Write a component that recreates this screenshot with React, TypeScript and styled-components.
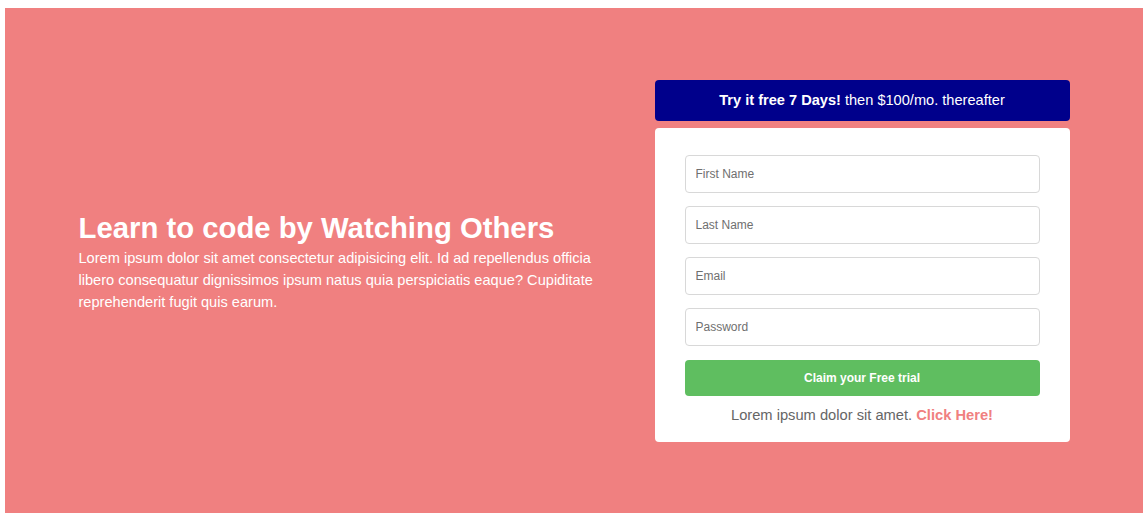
import React from "react";
import styled, { createGlobalStyle } from "styled-components";

const GlobalStyle = createGlobalStyle`
  * {
    box-sizing: border-box;
  }
  body {
    margin: 8px 5px 8px 5px;
    font-family: "Liberation Sans", Arial, sans-serif;
    background: #fff;
  }
`;

const Hero = styled.section`
  background: #f08080;
  height: 505px;
  display: flex;
  align-items: center;
  justify-content: center;
`;

const Container = styled.div`
  width: 991px;
  display: grid;
  grid-template-columns: 1fr 415px;
  gap: 50px;
  align-items: center;
`;

const Intro = styled.div`
  color: #fff;
  padding-top: 2px;
`;

const Title = styled.h1`
  margin: 0 0 2px;
  font-size: 29.3px;
  line-height: 34px;
  font-weight: 700;
`;

const Lead = styled.p`
  margin: 0;
  font-size: 14.6px;
  line-height: 22px;
`;

const Side = styled.div`
  display: flex;
  flex-direction: column;
  gap: 7px;
`;

const Offer = styled.div`
  background: #00008b;
  color: #fff;
  border-radius: 4px;
  height: 41px;
  display: flex;
  align-items: center;
  justify-content: center;
  font-size: 14.6px;

  strong {
    margin-right: 4px;
  }
`;

const Card = styled.form`
  background: #fff;
  border-radius: 4px;
  padding: 27px 30px 17px;
  display: flex;
  flex-direction: column;
  gap: 13px;
`;

const Field = styled.input`
  height: 38px;
  border: 1px solid #d8d8d8;
  border-radius: 4px;
  padding: 0 10px;
  font-family: inherit;
  font-size: 12px;
  color: #333;

  &::placeholder {
    color: #6f6f6f;
  }
`;

const Submit = styled.button`
  height: 36px;
  margin-top: 1px;
  border: none;
  border-radius: 4px;
  background: #5fbe60;
  color: #fff;
  font-family: inherit;
  font-size: 12px;
  font-weight: 700;
  cursor: pointer;
`;

const Note = styled.p`
  margin: -4px 0 0;
  text-align: center;
  color: #666;
  font-size: 14.7px;
  line-height: 20px;

  a {
    color: #f08080;
    font-weight: 700;
    text-decoration: none;
  }
`;

const App: React.FC = () => {
  return (
    <>
      <GlobalStyle />
      <Hero>
        <Container>
          <Intro>
            <Title>Learn to code by Watching Others</Title>
            <Lead>
              Lorem ipsum dolor sit amet consectetur adipisicing elit. Id ad
              repellendus officia libero consequatur dignissimos ipsum natus
              quia perspiciatis eaque? Cupiditate reprehenderit fugit quis
              earum.
            </Lead>
          </Intro>
          <Side>
            <Offer>
              <strong>Try it free 7 Days!</strong> then $100/mo. thereafter
            </Offer>
            <Card onSubmit={(e) => e.preventDefault()}>
              <Field type="text" placeholder="First Name" />
              <Field type="text" placeholder="Last Name" />
              <Field type="email" placeholder="Email" />
              <Field type="password" placeholder="Password" />
              <Submit type="submit">Claim your Free trial</Submit>
              <Note>
                Lorem ipsum dolor sit amet. <a href="#">Click Here!</a>
              </Note>
            </Card>
          </Side>
        </Container>
      </Hero>
    </>
  );
};

export default App;
